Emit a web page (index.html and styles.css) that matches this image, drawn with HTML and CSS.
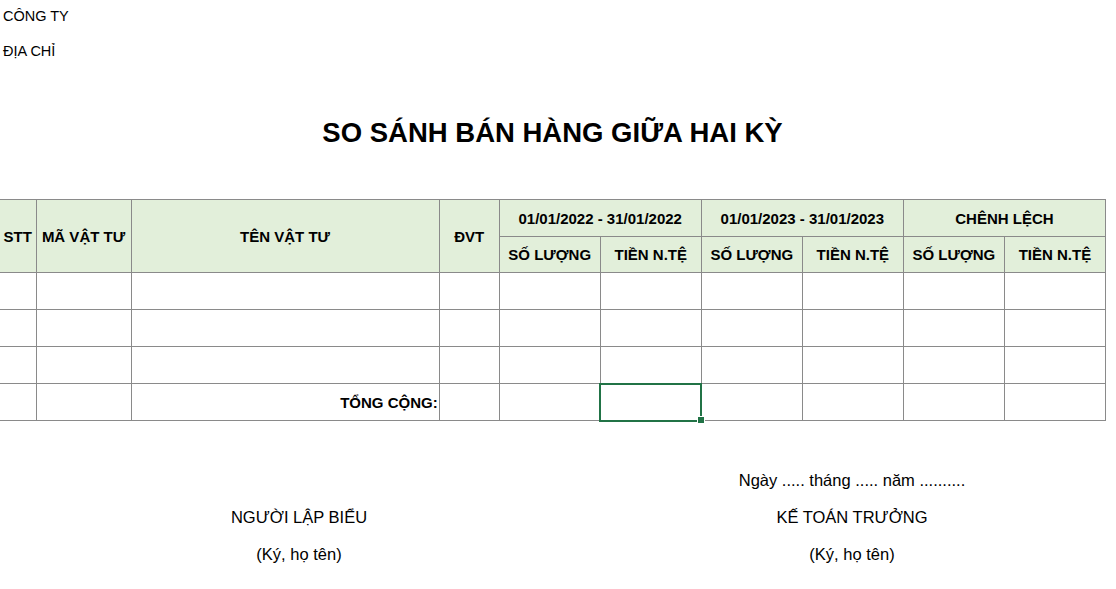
FILE: index.html
```html
<!DOCTYPE html>
<html lang="vi">
<head>
<meta charset="utf-8">
<link rel="stylesheet" href="styles.css">
</head>
<body>
<div class="page">
  <div class="company">CÔNG TY</div>
  <div class="address">ĐỊA CHỈ</div>
  <h1 class="title">SO SÁNH BÁN HÀNG GIỮA HAI KỲ</h1>
  <table class="sheet">
    <colgroup>
      <col class="c-stt"><col class="c-ma"><col class="c-ten"><col class="c-dvt">
      <col class="c-num"><col class="c-num"><col class="c-num"><col class="c-num"><col class="c-num"><col class="c-num">
    </colgroup>
    <thead>
      <tr class="h1">
        <th rowspan="2" class="first">STT</th>
        <th rowspan="2">MÃ VẬT TƯ</th>
        <th rowspan="2">TÊN VẬT TƯ</th>
        <th rowspan="2">ĐVT</th>
        <th colspan="2">01/01/2022 - 31/01/2022</th>
        <th colspan="2">01/01/2023 - 31/01/2023</th>
        <th colspan="2">CHÊNH LỆCH</th>
      </tr>
      <tr class="h2">
        <th>SỐ LƯỢNG</th><th>TIỀN N.TỆ</th>
        <th>SỐ LƯỢNG</th><th>TIỀN N.TỆ</th>
        <th>SỐ LƯỢNG</th><th>TIỀN N.TỆ</th>
      </tr>
    </thead>
    <tbody>
      <tr><td class="first"></td><td></td><td></td><td></td><td></td><td></td><td></td><td></td><td></td><td></td></tr>
      <tr><td class="first"></td><td></td><td></td><td></td><td></td><td></td><td></td><td></td><td></td><td></td></tr>
      <tr><td class="first"></td><td></td><td></td><td></td><td></td><td></td><td></td><td></td><td></td><td></td></tr>
      <tr><td class="first"></td><td></td><td class="total">TỔNG CỘNG:</td><td></td><td></td><td class="selected"><span class="handle"></span></td><td></td><td></td><td></td><td></td></tr>
    </tbody>
  </table>
  <div class="signs">
    <div class="sign">
      <div class="line"></div>
      <div class="line">NGƯỜI LẬP BIỂU</div>
      <div class="line">(Ký, họ tên)</div>
    </div>
    <div class="sign">
      <div class="line">Ngày ..... tháng ..... năm ..........</div>
      <div class="line">KẾ TOÁN TRƯỞNG</div>
      <div class="line">(Ký, họ tên)</div>
    </div>
  </div>
</div>
</body>
</html>
```
FILE: styles.css
```css
html, body {
  margin: 0;
  padding: 0;
  background: #ffffff;
}
.page {
  font-family: "Liberation Sans", Arial, sans-serif;
  color: #000;
  width: 1116px;
}
.company {
  height: 33px;
  line-height: 33px;
  font-size: 14.5px;
  padding-left: 3px;
}
.address {
  height: 37px;
  line-height: 37px;
  font-size: 14.5px;
  padding-left: 3px;
}
.title {
  margin: 0;
  height: 129px;
  box-sizing: border-box;
  font-size: 27.5px;
  font-weight: bold;
  text-align: center;
  width: 1105px;
  line-height: 126px;
}
.sheet {
  border-collapse: collapse;
  table-layout: fixed;
  width: 1106px;
}
.c-stt { width: 36px; }
.c-ma { width: 95px; }
.c-ten { width: 308px; }
.c-dvt { width: 60px; }
.c-num { width: 101px; }
.sheet th, .sheet td {
  border: 1px solid #8a8a8a;
  height: 37px;
  padding: 0;
  box-sizing: border-box;
  font-size: 15px;
}
.sheet .h2 th {
  height: 36px;
}
.sheet th {
  background: #e2efda;
  font-weight: bold;
  text-align: center;
  white-space: nowrap;
}
.sheet .first {
  border-left: none;
}
.sheet td.total {
  text-align: right;
  font-weight: bold;
  padding-right: 1px;
}
.sheet td.selected {
  position: relative;
  outline: 2px solid #217346;
  outline-offset: -1px;
}
.handle {
  position: absolute;
  right: -4px;
  bottom: -4px;
  width: 6px;
  height: 6px;
  background: #217346;
  border: 1px solid #fff;
}
.signs {
  display: grid;
  grid-template-columns: 598px 508px;
  padding-top: 41px;
}
.sign {
  text-align: center;
  font-size: 16.5px;
}
.line {
  height: 37px;
  line-height: 37px;
}
```
